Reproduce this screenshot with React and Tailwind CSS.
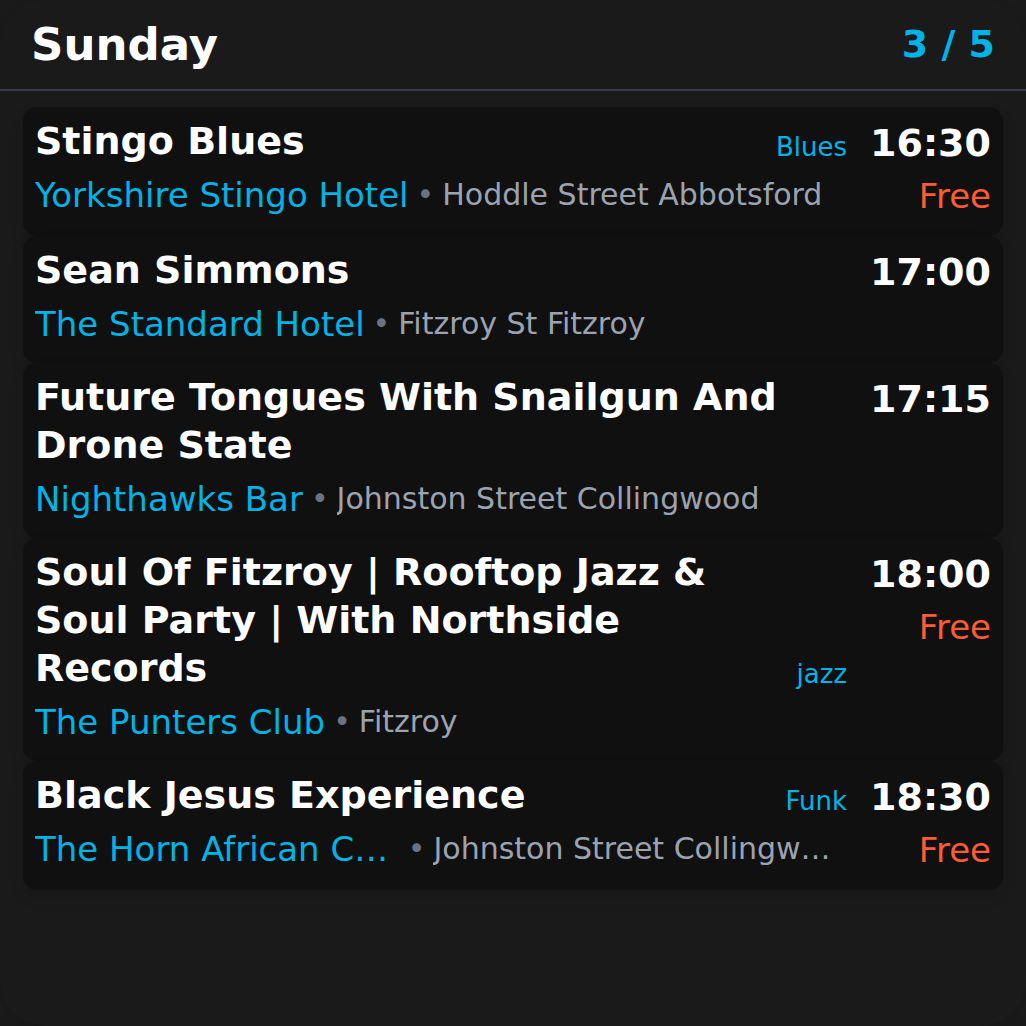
const gigs = [
  { title: "Stingo Blues", genre: "Blues", time: "16:30", price: "Free", venue: "Yorkshire Stingo Hotel", address: "Hoddle Street Abbotsford" },
  { title: "Sean Simmons", time: "17:00", venue: "The Standard Hotel", address: "Fitzroy St Fitzroy" },
  { title: "Future Tongues With Snailgun And Drone State", time: "17:15", venue: "Nighthawks Bar", address: "Johnston Street Collingwood" },
  { title: "Soul Of Fitzroy | Rooftop Jazz & Soul Party | With Northside Records", genre: "jazz", time: "18:00", price: "Free", venue: "The Punters Club", address: "Fitzroy" },
  { title: "Black Jesus Experience", genre: "Funk", time: "18:30", price: "Free", venue: "The Horn African Cafe", address: "Johnston Street Collingwood" },
];

function Gig({ gig }) {
  return (
    <li className="flex gap-[23px] rounded-[14px] bg-[#101010] px-3 pt-2.5 pb-3 shadow-[0_8px_16px_rgba(0,0,0,0.1)]">
      <div className="min-w-0 flex-1 pb-px">
        <div className="flex items-end gap-4">
          <h2 className="min-w-0 flex-1 text-[38px] leading-[48px] font-bold text-white">{gig.title}</h2>
          {gig.genre && <span className="shrink-0 text-[26px] leading-[36px] text-[#00b3e6]">{gig.genre}</span>}
        </div>
        <div className="mt-1 flex items-center gap-2 leading-[52px]">
          <span className="truncate text-[34px] text-[#00b3e6]">{gig.venue}</span>
          <span className="shrink-0 text-[30px] text-[#6b7280]">•</span>
          <span className="truncate text-[30px] text-[#9ca3af]">{gig.address}</span>
        </div>
      </div>
      <div className="flex shrink-0 flex-col items-end">
        <time className="text-[38px] leading-[52px] font-bold text-white">{gig.time}</time>
        {gig.price && <span className="text-[34px] leading-[55px] text-[#ff5c33]">{gig.price}</span>}
      </div>
    </li>
  );
}

export default function App() {
  return (
    <div className="min-h-screen overflow-hidden bg-[#1a1a1a] font-['DejaVu_Sans',sans-serif]">
      <main className="min-h-screen rounded-[46px] bg-[#1a1a1a] shadow-[0_8px_16px_rgba(0,0,0,0.1)]">
        <header className="flex items-center justify-between border-b-2 border-[#323a4b] px-[31px] pt-2.5 pb-2.5">
          <h1 className="text-[45px] leading-[69px] font-bold text-white">Sunday</h1>
          <span className="text-[38px] leading-[57px] font-bold text-[#00b3e6]">3 / 5</span>
        </header>
        <ul className="px-[23px] pt-4">
          {gigs.map((gig) => (
            <Gig key={gig.title} gig={gig} />
          ))}
        </ul>
      </main>
    </div>
  );
}
